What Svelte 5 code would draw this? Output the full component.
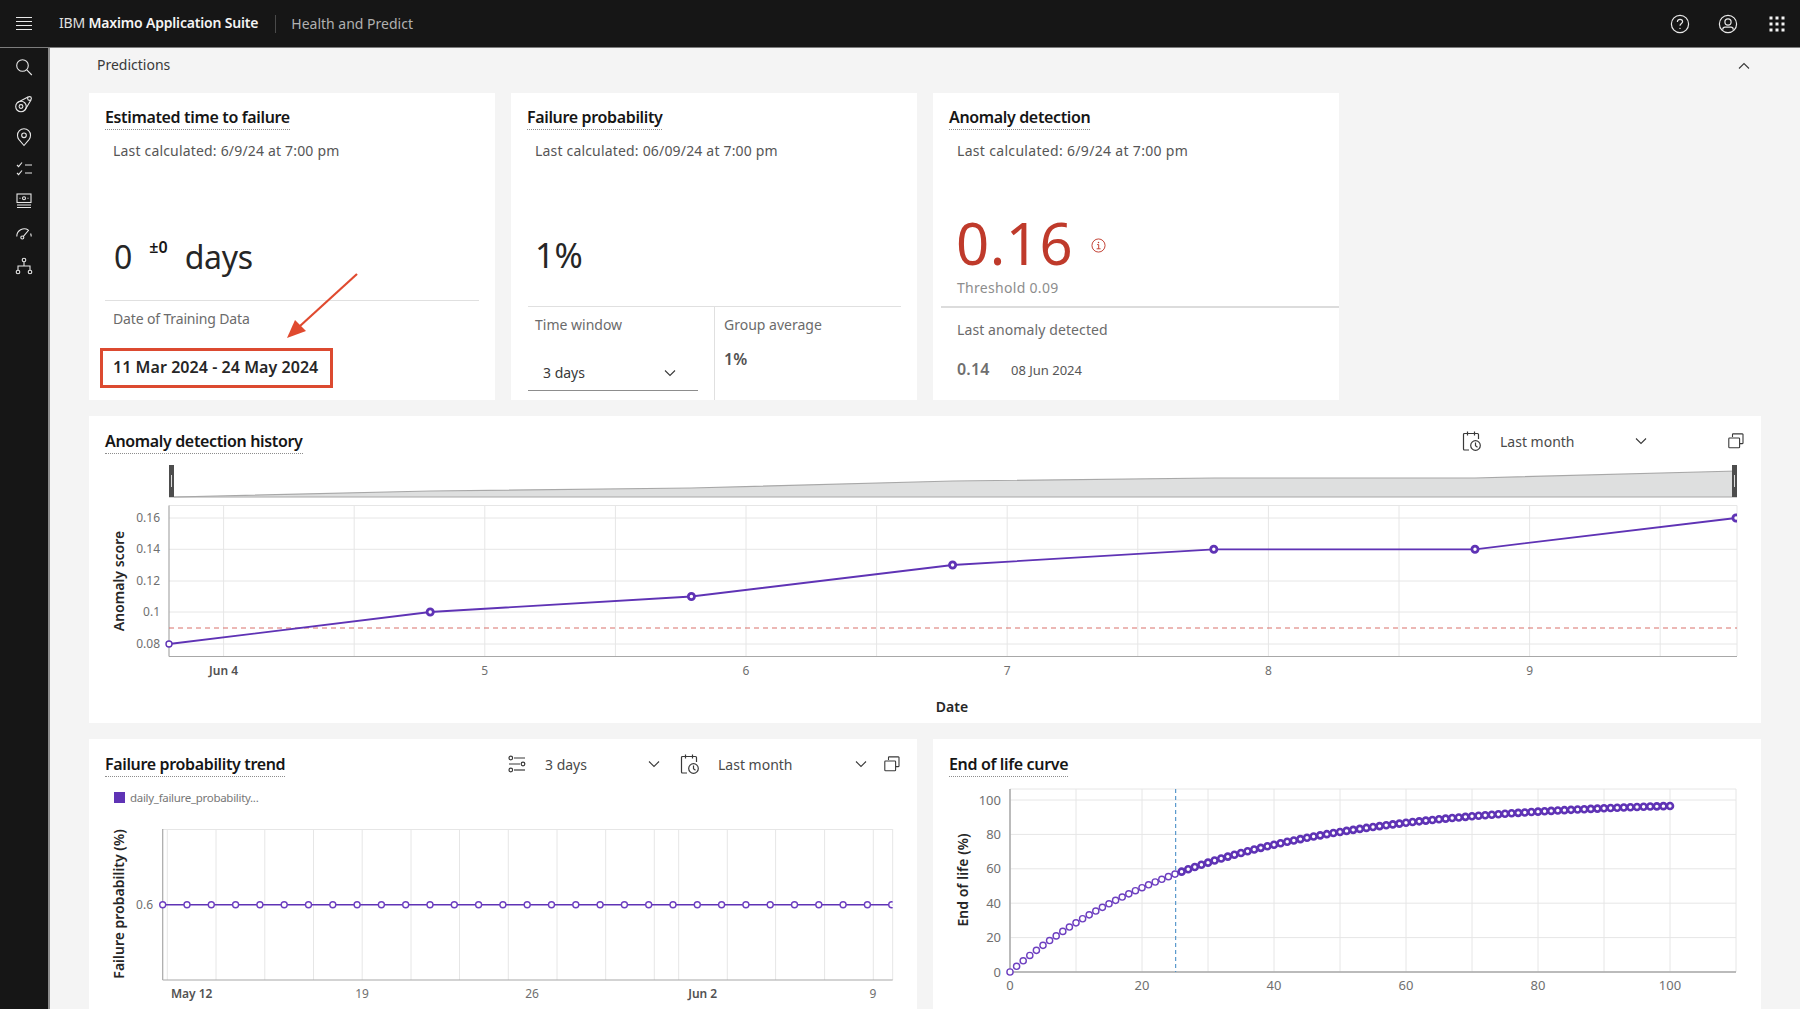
<script>
  const yTicks = [[518,'0.16'],[549.3,'0.14'],[581,'0.12'],[612,'0.1'],[644,'0.08']];
  const xGrid = Array.from({length:12},(_,i)=>223.6+130.6*i);
  const xLabels = [[223.6,'Jun 4',true],[484.8,'5'],[746,'6'],[1007.2,'7'],[1268.4,'8'],[1529.6,'9']];
  const pts = [[169,644],[430.2,612],[691.4,596.5],[952.6,565],[1213.8,549.3],[1475,549.3],[1736,518]];
  const line = pts.map(p=>p.join(',')).join(' ');
  const fpGrid = [167.3,216,264.8,313.5,362.2,411,459.5,508.3,557,605.7,654.3,678.7,727.3,775.6,824.6,873.3];
  const fpPts = Array.from({length:31},(_,i)=>162.7+24.3*i);
  const fpLabels = [[191.7,'May 12',true],[362,'19'],[532,'26'],[702.7,'Jun 2',true],[873,'9']];
  const eolX = v=>1010+6.6*v;
  const eolY = v=>972-1.72*v;
  const eolPts = Array.from({length:101},(_,i)=>[eolX(i),eolY(100*(1-Math.exp(-i/29.7)))]);
  const eolGridX = Array.from({length:12},(_,i)=>eolX(i*10));
  const eolTicks = [0,20,40,60,80,100];
  const dots = [];
  for (let r=0;r<3;r++) for (let c=0;c<3;c++) dots.push([4+c*6,4+r*6]);
</script>

{#snippet chev(up)}
  <svg class="chev" viewBox="0 0 16 16" width="16" height="16"><path d={up ? 'M3 10.5 8 5.5l5 5' : 'M3 5.5 8 10.5l5-5'} fill="none" stroke="currentColor" stroke-width="1.1"/></svg>
{/snippet}
{#snippet cal()}
  <svg class="tool" viewBox="0 0 20 20" width="20" height="20" fill="none" stroke="#393939" stroke-width="1.2">
    <path d="M7 19H2.5a1 1 0 0 1-1-1V3.500a1 1 0 0 1 1-1h13a1 1 0 0 1 1 1V8M5.500 .5v4M12.500 .5v4"/><circle cx="13.500" cy="14.500" r="4.800"/><path d="M13.500 11.500v3.300l2 1.400"/>
  </svg>
{/snippet}
{#snippet copy()}
  <svg class="tool" viewBox="0 0 16 16" width="16" height="16" fill="none" stroke="#393939" stroke-width="1.1">
    <path d="M4.500 4V1.500a.6.600 0 0 1 .6-.6h9.300a.6.600 0 0 1 .6.600V10a.6.600 0 0 1-.6.600H12"/><rect x=".8" y="5" width="10.800" height="9.800" rx=".8"/>
  </svg>
{/snippet}

<div class="app">
  <header class="top">
    <button class="menu" aria-label="Menu"><i></i><i></i><i></i><i></i></button>
    <div class="brand">IBM <b>Maximo Application Suite</b></div>
    <div class="appname">Health and Predict</div>
    <div class="actions">
      <svg viewBox="0 0 20 20" width="20" height="20" fill="none" stroke="#e8e8e8" stroke-width="1.200"><circle cx="10" cy="10" r="8.600"/><path d="M7.400 7.900c0-1.500 1.100-2.600 2.600-2.600s2.600 1 2.600 2.400c0 1.700-2.600 1.900-2.600 4"/><circle cx="10" cy="14.400" r=".7" fill="#e8e8e8" stroke="none"/></svg>
      <svg viewBox="0 0 20 20" width="20" height="20" fill="none" stroke="#e8e8e8" stroke-width="1.200"><circle cx="10" cy="10" r="8.600"/><circle cx="10" cy="8" r="3.100"/><path d="M4.800 15.800v-.6c0-1.300 1-2.100 2.200-2.100h6c1.200 0 2.200.8 2.200 2.100v.6"/></svg>
      <svg class="apps" viewBox="0 0 20 20" width="20" height="20" fill="#f4f4f4">{#each dots as d}<rect x={d[0]-1.500} y={d[1]-1.500} width="3" height="3"/>{/each}</svg>
    </div>
  </header>
  <div class="shell">
    <nav class="side">
      <svg viewBox="0 0 20 20" width="20" height="20"><circle cx="8.500" cy="8.500" r="5.800"/><path d="m12.800 12.800 5 5.200"/></svg>
      <svg viewBox="0 0 20 20" width="20" height="20"><circle cx="7" cy="12.500" r="5.300"/><circle cx="7" cy="12.500" r="1.900"/><circle cx="15.500" cy="4.500" r="1.900"/><path d="M3.500 8.500 14 2.900M11 16l6-10"/></svg>
      <svg viewBox="0 0 20 20" width="20" height="20"><path d="M10 18.500 4.800 12.300A6.600 6.600 0 0 1 3.500 8.300a6.500 6.500 0 0 1 13 0c0 1.500-.5 2.900-1.300 4z"/><circle cx="10" cy="8.300" r="2.300"/></svg>
      <svg viewBox="0 0 20 20" width="20" height="20"><path d="m3 6 1.600 1.700L8 3.500M3 14l1.600 1.700L8 11.500M11 6h7M11 14h7"/></svg>
      <svg viewBox="0 0 20 20" width="20" height="20"><rect x="3" y="3" width="14" height="8.500"/><path d="M3 14h14M3 16.500h14"/><circle cx="10" cy="7.200" r="1.500"/><path d="M5.500 7.200h1M13.500 7.200h1"/></svg>
      <svg viewBox="0 0 20 20" width="20" height="20"><path d="M2.800 13.500a7.500 7.500 0 0 1 11.500-6.500M17.200 13.500c0-1-.2-2-.6-3M9.200 13.700 14.800 7"/><circle cx="8.300" cy="14.500" r="1.500"/></svg>
      <svg viewBox="0 0 20 20" width="20" height="20"><circle cx="10" cy="4" r="1.800"/><circle cx="4" cy="16" r="1.800"/><circle cx="16" cy="16" r="1.800"/><path d="M10 5.800V10M4 14.200V10h12v4.200"/></svg>
    </nav>
    <main class="main">
      <div class="pred"><span>Predictions</span>{@render chev(true)}</div>
      <div class="grid">
        <section class="card c1">
          <h2><span>Estimated time to failure</span></h2>
          <p class="calc">Last calculated: 6/9/24 at 7:00 pm</p>
          <div class="bigrow one"><span class="big">0</span><sup>±0</sup><span class="big tight">days</span></div>
          <hr class="rule r1" />
          <p class="lab train">Date of Training Data</p>
          <div class="redbox">11 Mar 2024 - 24 May 2024</div>
          <svg class="arrow" viewBox="0 0 80 72" width="80" height="72"><path d="M74 3 17 55" stroke="#e04a2f" stroke-width="2.200" fill="none"/><path d="M4 67 12 49 23 60z" fill="#e04a2f"/></svg>
        </section>
        <section class="card c2">
          <h2><span>Failure probability</span></h2>
          <p class="calc">Last calculated: 06/09/24 at 7:00 pm</p>
          <div class="bigrow two"><span class="big wide">1%</span></div>
          <div class="split">
            <div class="cell left">
              <p class="lab">Time window</p>
              <div class="drop"><span>3 days</span>{@render chev(false)}</div>
            </div>
            <div class="cell right">
              <p class="lab">Group average</p>
              <p class="avg">1%</p>
            </div>
          </div>
        </section>
        <section class="card c3">
          <h2><span>Anomaly detection</span></h2>
          <p class="calc wider">Last calculated: 6/9/24 at 7:00 pm</p>
          <div class="score"><span>0.16</span>
            <svg viewBox="0 0 16 16" width="15" height="15" fill="none" stroke="#c0392b" stroke-width="1"><circle cx="8" cy="8" r="7"/><path d="M6.500 7h1.700v4.500M6 11.500h4.200"/><circle cx="8" cy="4.700" r=".8" fill="#c0392b" stroke="none"/></svg>
          </div>
          <p class="thresh">Threshold 0.09</p>
          <hr class="rule r3" />
          <p class="lab lastan">Last anomaly detected</p>
          <div class="lastrow"><b>0.14</b><span>08 Jun 2024</span></div>
        </section>
        <div class="spacer"></div>

        <section class="card wide4">
          <div class="head">
            <h2><span>Anomaly detection history</span></h2>
            <div class="tools">
              {@render cal()}
              <div class="sel s149"><span>Last month</span>{@render chev(false)}</div>
              {@render copy()}
            </div>
          </div>
          <svg class="chart" viewBox="89 465 1672 258" width="1672" height="258">
            <defs>
              <linearGradient id="fade" x1="0" x2="1" y1="0" y2="0"><stop offset="0" stop-color="#fff"/><stop offset=".08" stop-color="#dedfdf"/></linearGradient>
              <clipPath id="hclip"><rect x="160" y="505" width="1577" height="152"/></clipPath>
            </defs>
            <polygon points="169,497 430,491 691,488 953,481 1214,478 1475,478 1737,471 1737,497" fill="url(#fade)"/>
            <polyline points="174,497 430,491 691,488 953,481 1214,478 1475,478 1737,471" fill="none" stroke="#a8a8a8" stroke-width="1.200"/>
            <line x1="169" x2="1737" y1="497" y2="497" stroke="#a8a8a8" stroke-width="1.200"/>
            <rect x="169" y="465" width="5" height="32" fill="#4d4d4d"/><rect x="171" y="475" width="1" height="12" fill="#ddd"/>
            <rect x="1732" y="465" width="5" height="32" fill="#4d4d4d"/><rect x="1734" y="475" width="1" height="12" fill="#ddd"/>

            <g stroke="#e6e6e6" stroke-width="1">
              {#each xGrid as x}<line x1={x} x2={x} y1="505.500" y2="656"/>{/each}
              {#each yTicks as t}<line x1="169" x2="1737" y1={t[0]} y2={t[0]}/>{/each}
              <line x1="169" x2="1737" y1="505.500" y2="505.500"/>
              <line x1="1737" x2="1737" y1="505.500" y2="656"/>
            </g>
            <line x1="169" x2="169" y1="505.500" y2="656.500" stroke="#a8a8a8" stroke-width="1.200"/>
            <line x1="169" x2="1737" y1="656.500" y2="656.500" stroke="#a8a8a8" stroke-width="1.200"/>
            <line x1="169" x2="1737" y1="628" y2="628" stroke="#d9716a" stroke-width="1" stroke-dasharray="5 4"/>
            {#each yTicks as t}<text class="tick" x="160" y={t[0]+4} text-anchor="end">{t[1]}</text>{/each}
            {#each xLabels as l}<text class="tick" class:strong={l[2]} x={l[0]} y="674.500" text-anchor="middle">{l[1]}</text>{/each}
            <text class="axis" transform="translate(124 581) rotate(-90)" text-anchor="middle">Anomaly score</text>
            <text class="axis" x="952" y="712" text-anchor="middle">Date</text>
            <polyline points={line} fill="none" stroke="#5f33b5" stroke-width="1.800"/>
            <circle cx="169" cy="644" r="3" fill="#fff" stroke="#5f33b5" stroke-width="1.400"/>
            <g clip-path="url(#hclip)">
              {#each pts.slice(1) as p}<circle cx={p[0]} cy={p[1]} r="3.100" fill="#fff" stroke="#5f33b5" stroke-width="2.800"/>{/each}
            </g>
          </svg>
        </section>

        <section class="card wide2">
          <div class="head">
            <h2><span>Failure probability trend</span></h2>
            <div class="tools narrow">
              <svg class="tool" viewBox="0 0 20 20" width="20" height="20" fill="none" stroke="#393939" stroke-width="1.200"><circle cx="3.800" cy="4" r="1.800"/><path d="M7 4h11M2 10h11"/><circle cx="16" cy="10" r="1.800"/><circle cx="3.800" cy="16" r="1.800"/><path d="M7 16h11"/></svg>
              <div class="sel s117"><span>3 days</span>{@render chev(false)}</div>
              {@render cal()}
              <div class="sel s151"><span>Last month</span>{@render chev(false)}</div>
              {@render copy()}
            </div>
          </div>
          <div class="legend"><i></i><span>daily_failure_probability...</span></div>
          <svg class="chart" viewBox="89 815 828 194" width="828" height="194">
            <defs><clipPath id="fclip"><rect x="155" y="829" width="737.700" height="152"/></clipPath></defs>
            <g stroke="#e6e6e6" stroke-width="1">
              {#each fpGrid as x}<line x1={x} x2={x} y1="829" y2="980"/>{/each}
              <line x1="162.700" x2="892.700" y1="829.500" y2="829.500"/>
              <line x1="892.700" x2="892.700" y1="829" y2="980"/>
            </g>
            <line x1="162.700" x2="162.700" y1="829" y2="980" stroke="#a8a8a8" stroke-width="1.200"/>
            <line x1="162.700" x2="892.700" y1="980" y2="980" stroke="#a8a8a8" stroke-width="1.200"/>
            <line x1="162.700" x2="892.700" y1="904.700" y2="904.700" stroke="#5f33b5" stroke-width="1.400"/>
            <g clip-path="url(#fclip)">
              {#each fpPts as x}<circle cx={x} cy="904.700" r="3" fill="#fff" stroke="#6d3fc0" stroke-width="1.400"/>{/each}
            </g>
            <text class="tick" x="153" y="909" text-anchor="end">0.6</text>
            {#each fpLabels as l}<text class="tick" class:strong={l[2]} x={l[0]} y="998" text-anchor="middle">{l[1]}</text>{/each}
            <text class="axis" transform="translate(124 904) rotate(-90)" text-anchor="middle">Failure probability (%)</text>
          </svg>
        </section>

        <section class="card wide2">
          <div class="head">
            <h2><span>End of life curve</span></h2>
          </div>
          <svg class="chart" viewBox="933 788 828 221" width="828" height="221">
            <g stroke="#e6e6e6" stroke-width="1">
              {#each eolGridX as x}<line x1={x} x2={x} y1="789" y2="972"/>{/each}
              {#each eolTicks as t}<line x1="1010" x2="1736" y1={eolY(t)} y2={eolY(t)}/>{/each}
              <line x1="1010" x2="1736" y1="789" y2="789"/>
            </g>
            <line x1="1010" x2="1010" y1="789" y2="972" stroke="#a8a8a8" stroke-width="1.500"/>
            <line x1="1010" x2="1736" y1="972" y2="972" stroke="#a8a8a8" stroke-width="1.500"/>
            <line x1={eolX(25.100)} x2={eolX(25.100)} y1="789" y2="972" stroke="#4a90c8" stroke-width="1.100" stroke-dasharray="4 3"/>
            {#each eolPts as p, i}
              {#if i <= 25}
                <circle cx={p[0]} cy={p[1]} r="3.100" fill="#fff" stroke="#6d3fc0" stroke-width="1.400"/>
              {:else}
                <circle cx={p[0]} cy={p[1]} r="3" fill="#fff" stroke="#5f33b5" stroke-width="2.600"/>
              {/if}
            {/each}
            {#each eolTicks as t}
              <text class="tick big2" x="1001" y={eolY(t)+4.500} text-anchor="end">{t}</text>
              <text class="tick big2" x={eolX(t)} y="990" text-anchor="middle">{t}</text>
            {/each}
            <text class="axis" transform="translate(968 880) rotate(-90)" text-anchor="middle">End of life (%)</text>
          </svg>
        </section>
      </div>
    </main>
  </div>
</div>

<style>
  :global(body){margin:0;overflow:hidden;background:#f4f4f4}
  .app{height:1009px;width:1800px;display:flex;flex-direction:column;overflow:hidden;font-family:"Noto Sans","Open Sans",sans-serif;color:#161616}
  .top{height:47px;flex:none;background:#161616;border-bottom:1px solid #7d7d7d;display:flex;align-items:center;color:#f4f4f4;font-size:14px;box-sizing:content-box}
  .menu{width:48px;height:47px;background:none;border:0;padding:0;display:flex;flex-direction:column;align-items:center;justify-content:center;gap:2.500px}
  .menu i{display:block;width:16px;height:1.400px;background:#e8e8e8}
  .brand{padding:0 17px 0 11px;height:18px;line-height:16px;border-right:1px solid #4a4a4a;letter-spacing:-.18px;font-size:14px;color:#e0e0e0;white-space:nowrap}
  .brand b{font-weight:600;color:#f4f4f4}
  .appname{padding:0 0 1px 15px;color:#b0b0b0;letter-spacing:0}
  .actions{margin-left:auto;display:flex;gap:28px;padding-right:13px}
  .apps{margin-left:1px}
  .shell{flex:1;display:flex;min-height:0}
  .side{width:48px;flex:none;background:#161616;border-right:2px solid #8d8d8d;display:flex;flex-direction:column;align-items:center;padding-top:9px;gap:12.300px}
  .side svg{fill:none;stroke:#e8e8e8;stroke-width:1.100}
  .side svg:first-child{margin-bottom:5px}
  .main{flex:1;background:#f4f4f4;padding:0 39px;min-width:0}
  .pred{height:45px;display:flex;align-items:flex-start;justify-content:space-between;padding:7px 9px 0 8px;box-sizing:border-box;font-size:14px;line-height:19px;color:#393939}
  .pred :global(.chev){margin-top:3px;color:#393939}
  .grid{display:grid;grid-template-columns:repeat(4,406px);grid-auto-rows:307px;gap:16px}
  .card{background:#fff;position:relative;min-width:0}
  .wide4{grid-column:span 4}
  .wide2{grid-column:span 2}
  h2{margin:0;font-size:16px;line-height:21px;font-weight:600;color:#161616;letter-spacing:-.35px}
  h2 span{display:inline-block;border-bottom:1px dotted #8d8d8d;padding-bottom:1px}
  .c1,.c2,.c3{padding:14px 16px 0;box-sizing:border-box}
  p{margin:0}
  .calc{font-size:14px;line-height:19px;color:#565656;padding:11px 0 0 8px;letter-spacing:.18px}
  .calc.wider{letter-spacing:.32px}
  .bigrow{display:flex;padding-left:9px;align-items:flex-start}
  .big{font-size:32px;line-height:42px;color:#262626;font-weight:400}
  .tight{letter-spacing:-.3px}
  .wide{font-size:34px}
  .one{margin-top:76px}
  .one sup{font-size:16px;line-height:18px;font-weight:600;margin:2px 17px 0 17px}
  .two{margin-top:74px;padding-left:8px}
  .rule{border:0;height:1px;background:#e0e0e0;margin:0}
  .r1{margin-top:22px}
  .lab{font-size:14px;line-height:19px;color:#6b6b6b}
  .train{padding:8px 0 0 8px;letter-spacing:-.15px}
  .redbox{margin:20px 0 0 -5px;width:233px;height:39.500px;border:3px solid #dc4a30;box-sizing:border-box;padding-left:10px;font-size:16px;font-weight:600;line-height:32px;color:#262626;white-space:nowrap;letter-spacing:.05px}
  .arrow{position:absolute;left:194px;top:178px}
  .split{display:flex;height:93px;margin-top:30px;border-top:1px solid #e0e0e0}
  .c2 .split{margin-left:1px;margin-right:0}
  .cell{box-sizing:border-box;padding-top:8px}
  .left{width:187px;border-right:1px solid #e0e0e0;padding-left:7px}
  .right{padding-left:9px}
  .drop{width:170px;margin:21px 0 0 -7px;box-sizing:border-box;height:36px;border-bottom:1px solid #8d8d8d;display:flex;align-items:center;justify-content:space-between;padding:0 20px 0 15px;font-size:14px;color:#393939}
  .avg{margin-top:15px;font-size:16px;line-height:21px;font-weight:600;color:#525252}
  .score{margin:47px 0 0 7px;display:flex;align-items:center;gap:18px;font-size:58px;line-height:74px;color:#bf3a2b;height:71px;letter-spacing:.5px}
  .score svg{margin-top:6px}
  .thresh{font-size:14px;line-height:19px;color:#8d8d8d;padding:0 0 0 8px;letter-spacing:.3px}
  .r3{margin:9px -16px 0 -8px;background:#dcdcdc;height:1.500px}
  .lastan{padding:12px 0 0 8px;letter-spacing:.1px}
  .lastrow{display:flex;align-items:baseline;margin:19px 0 0 8px}
  .lastrow b{font-size:16px;font-weight:600;color:#6f6f6f;width:54px;letter-spacing:.2px}
  .lastrow span{font-size:13px;color:#565656}
  .head{display:flex;align-items:flex-start;height:49px;padding:15px 17px 0 16px;box-sizing:border-box;justify-content:space-between}
  .tools{display:flex;align-items:center;font-size:14px;color:#393939;height:20px}
  .sel{display:flex;align-items:center;justify-content:space-between;margin-left:18px;box-sizing:border-box}
  .sel span{color:#4a4a4a}
  .s149{width:149px;margin-right:79px}
  .s117{width:117px;margin-right:18px}
  .s151{width:151px;margin-right:15px}
  .chart{display:block}
  .legend{height:27px;box-sizing:border-box;padding:3px 0 0 25px;display:flex;align-items:flex-start;gap:5px;font-size:11.500px;color:#777;line-height:14px;letter-spacing:-.3px}
  .legend i{display:block;width:11px;height:11px;margin-top:1px;background:#5f33b5}
  .tick{font-size:12px;fill:#6f6f6f}
  .strong{font-weight:600;fill:#525252}
  .big2{font-size:13px}
  .axis{font-size:14px;font-weight:600;fill:#262626}
</style>
